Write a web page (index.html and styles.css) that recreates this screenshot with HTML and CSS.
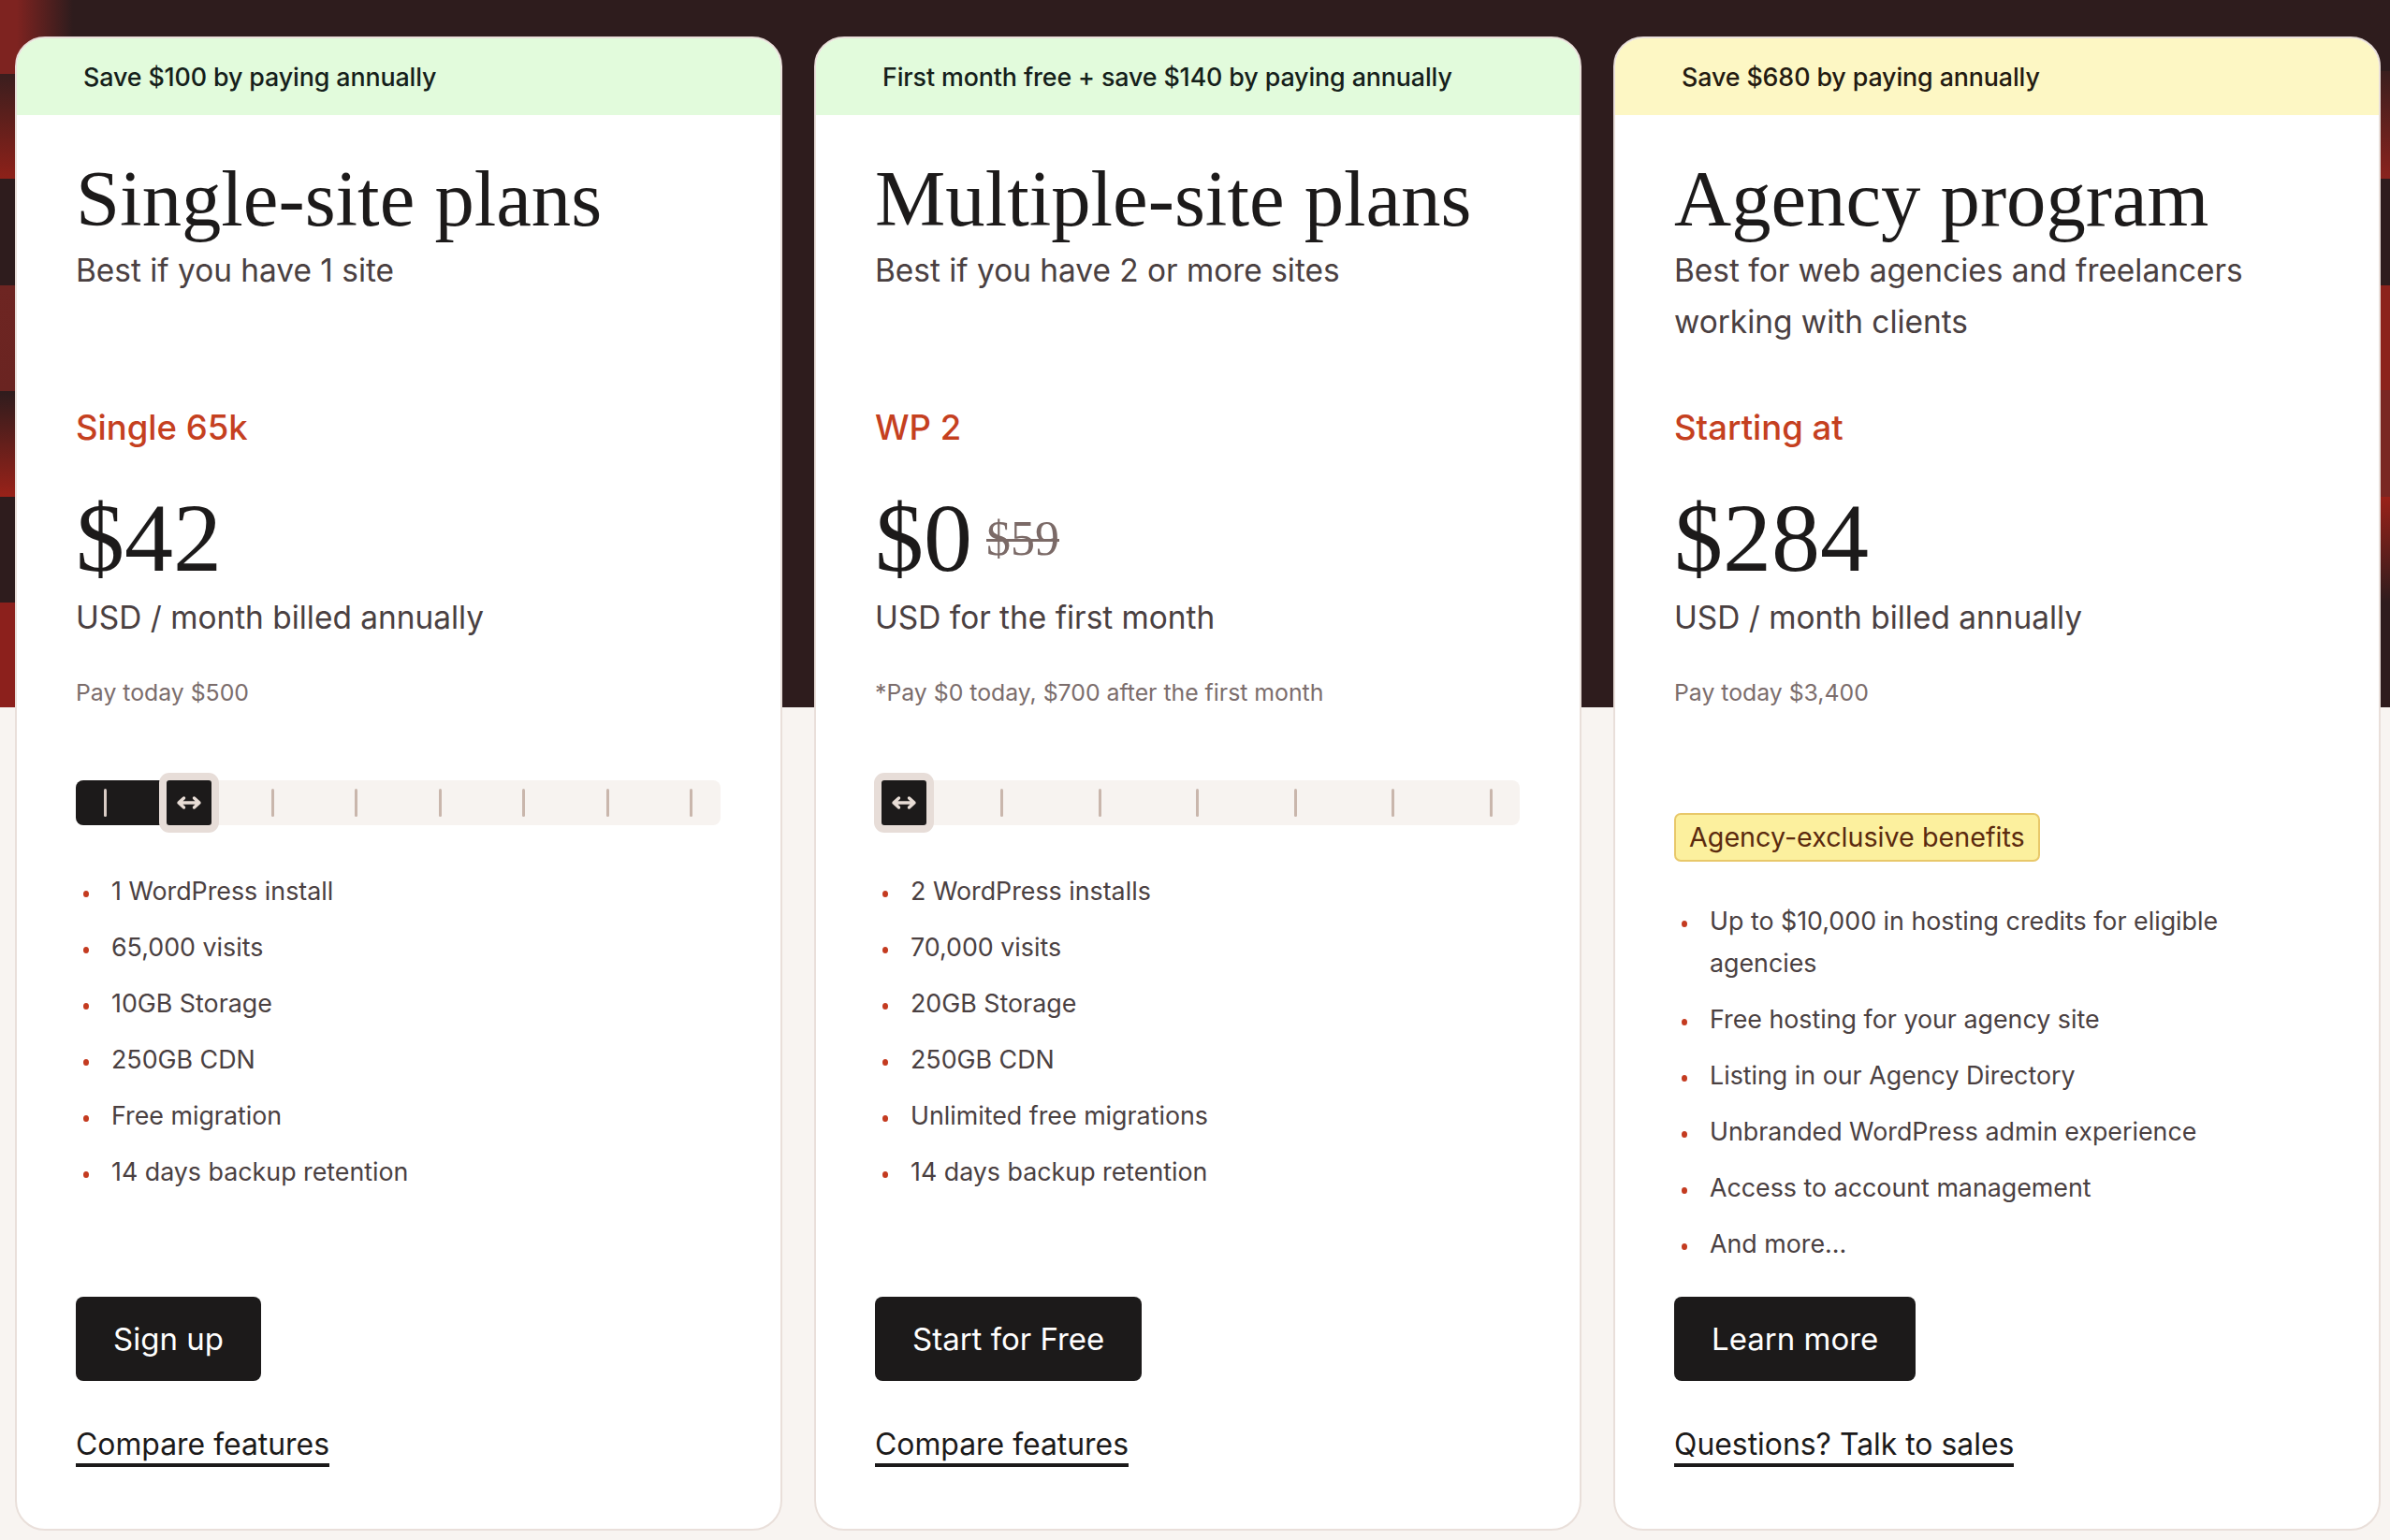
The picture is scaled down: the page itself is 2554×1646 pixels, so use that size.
FILE: index.html
```html
<!DOCTYPE html>
<html lang="en">
<head>
<meta charset="utf-8">
<title>Plans</title>
<link rel="stylesheet" href="styles.css">
</head>
<body>
<div class="page">
  <div class="plans">

    <article class="card">
      <div class="banner banner--green">Save $100 by paying annually</div>
      <div class="card-body">
        <div class="head">
          <h2 class="title">Single-site plans</h2>
          <p class="subtitle">Best if you have 1 site</p>
        </div>
        <p class="label">Single 65k</p>
        <div class="price"><span class="amount">$42</span></div>
        <p class="unit">USD / month billed annually</p>
        <p class="note">Pay today $500</p>
        <div class="slider">
          <div class="slider-fill" style="width:120px"></div>
          <div class="stops">
            <span class="stop stop--on"></span>
            <span class="stop stop--thumb"><span class="thumb"><svg width="28" height="16" viewBox="0 0 28 16"><path d="M3 8h22M8.5 3L3 8l5.5 5M19.5 3L25 8l-5.5 5" fill="none" stroke="#e8ddd6" stroke-width="3.4" stroke-linecap="round" stroke-linejoin="round"/></svg></span></span>
            <span class="stop"></span>
            <span class="stop"></span>
            <span class="stop"></span>
            <span class="stop"></span>
            <span class="stop"></span>
            <span class="stop"></span>
          </div>
        </div>
        <ul class="features">
          <li>1 WordPress install</li>
          <li>65,000 visits</li>
          <li>10GB Storage</li>
          <li>250GB CDN</li>
          <li>Free migration</li>
          <li>14 days backup retention</li>
        </ul>
        <div class="actions">
          <a class="btn" href="#">Sign up</a>
          <a class="link" href="#">Compare features</a>
        </div>
      </div>
    </article>

    <article class="card">
      <div class="banner banner--green">First month free + save $140 by paying annually</div>
      <div class="card-body">
        <div class="head">
          <h2 class="title">Multiple-site plans</h2>
          <p class="subtitle">Best if you have 2 or more sites</p>
        </div>
        <p class="label">WP 2</p>
        <div class="price"><span class="amount">$0</span><s class="old">$59</s></div>
        <p class="unit">USD for the first month</p>
        <p class="note">*Pay $0 today, $700 after the first month</p>
        <div class="slider">
          <div class="stops">
            <span class="stop stop--thumb"><span class="thumb"><svg width="28" height="16" viewBox="0 0 28 16"><path d="M3 8h22M8.5 3L3 8l5.5 5M19.5 3L25 8l-5.5 5" fill="none" stroke="#e8ddd6" stroke-width="3.4" stroke-linecap="round" stroke-linejoin="round"/></svg></span></span>
            <span class="stop"></span>
            <span class="stop"></span>
            <span class="stop"></span>
            <span class="stop"></span>
            <span class="stop"></span>
            <span class="stop"></span>
          </div>
        </div>
        <ul class="features">
          <li>2 WordPress installs</li>
          <li>70,000 visits</li>
          <li>20GB Storage</li>
          <li>250GB CDN</li>
          <li>Unlimited free migrations</li>
          <li>14 days backup retention</li>
        </ul>
        <div class="actions">
          <a class="btn" href="#">Start for Free</a>
          <a class="link" href="#">Compare features</a>
        </div>
      </div>
    </article>

    <article class="card">
      <div class="banner banner--yellow">Save $680 by paying annually</div>
      <div class="card-body">
        <div class="head">
          <h2 class="title">Agency program</h2>
          <p class="subtitle">Best for web agencies and freelancers working with clients</p>
        </div>
        <p class="label">Starting at</p>
        <div class="price"><span class="amount">$284</span></div>
        <p class="unit">USD / month billed annually</p>
        <p class="note">Pay today $3,400</p>
        <span class="badge">Agency-exclusive benefits</span>
        <ul class="features features--agency">
          <li>Up to $10,000 in hosting credits for eligible agencies</li>
          <li>Free hosting for your agency site</li>
          <li>Listing in our Agency Directory</li>
          <li>Unbranded WordPress admin experience</li>
          <li>Access to account management</li>
          <li>And more...</li>
        </ul>
        <div class="actions">
          <a class="btn" href="#">Learn more</a>
          <a class="link" href="#">Questions? Talk to sales</a>
        </div>
      </div>
    </article>

  </div>
</div>
</body>
</html>
```
FILE: styles.css
```css
* { box-sizing: border-box; }

html, body {
  margin: 0;
  padding: 0;
}

body {
  background: #f8f4f1;
  font-family: "Inter", "Noto Sans", sans-serif;
  color: #4a4041;
}

.page {
  min-height: 1646px;
  background:
    linear-gradient(to right, #7e2320 0, #7e2320 18px, rgba(46, 28, 29, 0) 78px) no-repeat 0 0 / 80px 79px,
    linear-gradient(to bottom,
      #7e2320 0, #7e2320 79px,
      #3a1e1e 79px, #8e2119 191px,
      #2e1c1d 191px, #2e1c1d 305px,
      #6e2522 305px, #6a2421 418px,
      #2e1c1d 418px, #9a2219 531px,
      #2e1c1d 531px, #2e1c1d 644px,
      #8c201c 644px, #8c201c 756px) no-repeat 0 0 / 16px 756px,
    linear-gradient(to bottom,
      #2e1c1d 0, #2e1c1d 76px,
      #3a1e1e 76px, #8a231d 191px,
      #2e1c1d 191px, #2e1c1d 305px,
      #8c221c 305px, #8c221c 417px,
      #7a2723 417px, #7a2723 531px,
      #9a2219 531px, #2e1c1d 644px,
      #2e1c1d 644px, #2e1c1d 756px) no-repeat 100% 0 / 10px 756px,
    linear-gradient(to bottom, #2e1c1d 0, #2e1c1d 756px, #f8f4f1 756px) no-repeat 0 0 / 100% 100%;
  padding: 39px 0 0 16px;
}

.plans {
  display: grid;
  grid-template-columns: repeat(3, 820px);
  column-gap: 34px;
  align-items: stretch;
}

.card {
  background: #ffffff;
  border: 2px solid #e9dfda;
  border-radius: 32px;
  overflow: hidden;
  display: flex;
  flex-direction: column;
}

.banner {
  height: 82px;
  display: flex;
  align-items: center;
  padding-left: 71px;
  font-size: 26.8px;
  font-weight: 500;
  color: #15201a;
  letter-spacing: -0.1px;
}

.banner--green { background: #e2fbdc; }
.banner--yellow { background: #fdf7c4; color: #231a10; }

.card-body {
  flex: 1;
  display: flex;
  flex-direction: column;
  padding: 48px 64px 66.6px 63px;
}

.head {
  min-height: 200.7px;
}

.title {
  margin: 0;
  font-family: "Liberation Serif", "Times New Roman", serif;
  font-weight: 400;
  font-size: 84.7px;
  line-height: 1;
  color: #1c1a1a;
}

.subtitle {
  margin: 6px 0 0;
  font-size: 33.4px;
  line-height: 55px;
  color: #4a4041;
  max-width: 640px;
}

.label {
  margin: 65.2px 0 0;
  font-size: 36.5px;
  line-height: 40px;
  font-weight: 500;
  color: #c5401f;
}

.price {
  margin-top: 46.6px;
  height: 104px;
  font-family: "Liberation Serif", "Times New Roman", serif;
  font-size: 104px;
  line-height: 1;
  color: #1c1a1a;
  white-space: nowrap;
}

.old {
  display: inline-block;
  margin-left: 15px;
  font-size: 52px;
  line-height: 1;
  color: #7b6a67;
  vertical-align: 17px;
  text-decoration: line-through;
  text-decoration-thickness: 3px;
}

.unit {
  margin: 6px 0 0;
  font-size: 33.4px;
  line-height: 55px;
  color: #4a4041;
}

.note {
  margin: 34px 0 0;
  font-size: 24.8px;
  line-height: 36px;
  color: #7b6d6c;
}

.slider {
  position: relative;
  margin-top: 76px;
  height: 48px;
  background: #f7f3f0;
  border-radius: 8px;
}

.slider-fill {
  position: absolute;
  left: 0;
  top: 0;
  bottom: 0;
  background: #1c1a1a;
  border-radius: 8px 0 0 8px;
}

.stops {
  position: relative;
  height: 100%;
  display: flex;
  justify-content: space-between;
  align-items: center;
  padding: 0 29.5px;
}

.stop {
  width: 3px;
  height: 30px;
  border-radius: 2px;
  background: #c9b6ac;
}

.stop--on { background: #d9ccc5; }

.stop--thumb {
  position: relative;
  background: transparent;
}

.thumb {
  position: absolute;
  left: 50%;
  top: 50%;
  width: 64px;
  height: 64px;
  margin: -32px 0 0 -32px;
  border: 8px solid #e7ddd8;
  border-radius: 11px;
  background: #1c1a1a;
  display: flex;
  align-items: center;
  justify-content: center;
}

.badge {
  align-self: flex-start;
  margin-top: 111px;
  height: 52px;
  padding: 0 14px;
  border: 2px solid #e8c86a;
  border-radius: 7px;
  background: #fcf09e;
  font-size: 28.7px;
  line-height: 48px;
  color: #5b2a0e;
  white-space: nowrap;
}

.features {
  list-style: none;
  margin: 47.2px 0 0;
  padding: 0;
  display: flex;
  flex-direction: column;
  gap: 15px;
  max-width: 640px;
}

.features--agency { margin-top: 40.7px; }

.features li {
  display: flex;
  font-size: 26.8px;
  line-height: 45px;
  color: #4a4041;
}

.features li::before {
  content: "";
  flex: 0 0 6px;
  width: 6px;
  height: 7px;
  margin: 22px 24px 0 8px;
  border-radius: 50%;
  background: #c43b20;
}

.actions {
  margin-top: auto;
  padding-top: 33.8px;
  display: flex;
  flex-direction: column;
  align-items: flex-start;
}

.btn {
  display: inline-block;
  height: 90px;
  padding: 0 40px;
  border-radius: 8px;
  background: #1c1a1a;
  color: #ffffff;
  font-size: 33px;
  line-height: 90px;
  text-decoration: none;
}

.link {
  display: inline-block;
  margin-top: 47.9px;
  font-size: 31.9px;
  line-height: 40px;
  color: #1c1a1a;
  text-decoration: none;
  border-bottom: 4px solid #1c1a1a;
}
```
